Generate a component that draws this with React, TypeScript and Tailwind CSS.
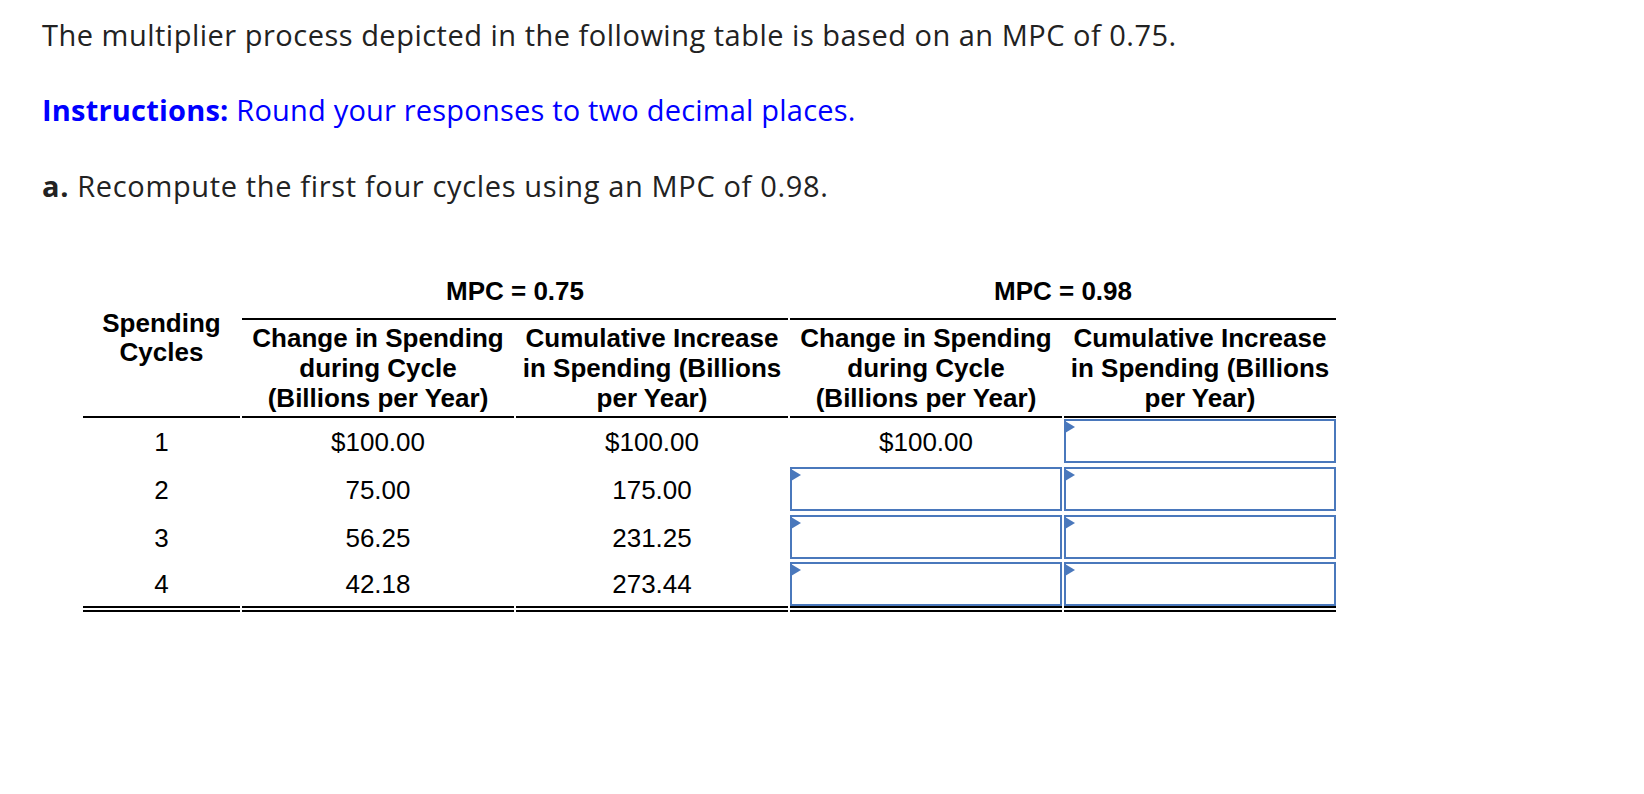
import React from "react";

type Row = {
  cycle: number;
  change: string;
  cumulative: string;
  changeNew: string | null;
};

const rows: Row[] = [
  { cycle: 1, change: "$100.00", cumulative: "$100.00", changeNew: "$100.00" },
  { cycle: 2, change: "75.00", cumulative: "175.00", changeNew: null },
  { cycle: 3, change: "56.25", cumulative: "231.25", changeNew: null },
  { cycle: 4, change: "42.18", cumulative: "273.44", changeNew: null },
];

function AnswerBox({ label }: { label: string }) {
  return (
    <div className="relative h-[44px] w-full border-2 border-[#4a78bc] bg-white">
      <svg
        className="absolute left-[-1px] top-0"
        width="10"
        height="12"
        viewBox="0 0 10 12"
      >
        <polygon points="0,0 10,6 0,12" fill="#4a78bc" />
      </svg>
      <input
        aria-label={label}
        className="h-full w-full bg-transparent px-3 text-center text-[26px] outline-none"
      />
    </div>
  );
}

function HeadCell({ children }: { children: React.ReactNode }) {
  return (
    <div className="flex h-[98px] items-center justify-center border-b-2 border-black text-center leading-[30px] font-bold">
      {children}
    </div>
  );
}

export default function App() {
  return (
    <div className="min-h-screen bg-white">
      <div className="px-[42px] pt-[18px] font-['Open_Sans',sans-serif] text-[29px] leading-[34px] text-[#222]">
        <p className="tracking-[0.5px]">
          The multiplier process depicted in the following table is based on an MPC of 0.75.
        </p>
        <p className="mt-[41px] tracking-[0.2px] text-[#0000ff]">
          <span className="font-bold">Instructions:</span> Round your responses to two decimal places.
        </p>
        <p className="mt-[42px] tracking-[0.65px]">
          <span className="font-bold">a.</span> Recompute the first four cycles using an MPC of 0.98.
        </p>
      </div>

      <div className="ml-[83px] mt-[62px] grid w-fit grid-cols-[157px_272px_272px_272px_272px] gap-x-[2px] font-['Liberation_Sans',Arial,sans-serif] text-[26px] text-black">
        {/* header */}
        <div className="row-span-2 flex items-center justify-center border-b-2 border-black pb-[5px] text-center font-bold leading-[29px]">
          Spending
          <br />
          Cycles
        </div>
        <div className="col-span-2 flex h-[55px] items-center justify-center border-b-2 border-black font-bold">
          MPC = 0.75
        </div>
        <div className="col-span-2 flex h-[55px] items-center justify-center border-b-2 border-black font-bold">
          MPC = 0.98
        </div>
        <HeadCell>
          Change in Spending
          <br />
          during Cycle
          <br />
          (Billions per Year)
        </HeadCell>
        <HeadCell>
          Cumulative Increase
          <br />
          in Spending (Billions
          <br />
          per Year)
        </HeadCell>
        <HeadCell>
          Change in Spending
          <br />
          during Cycle
          <br />
          (Billions per Year)
        </HeadCell>
        <HeadCell>
          Cumulative Increase
          <br />
          in Spending (Billions
          <br />
          per Year)
        </HeadCell>

        {/* body */}
        {rows.map((r, i) => {
          const last = i === rows.length - 1;
          const cell = last
            ? "flex h-[50px] items-center justify-center border-b-[6px] border-double border-black"
            : "flex h-[48px] items-center justify-center";
          const boxCell = last
            ? "flex h-[50px] items-start border-b-[6px] border-double border-black"
            : "flex h-[48px] items-start pt-[1px]";
          return (
            <React.Fragment key={r.cycle}>
              <div className={cell}>{r.cycle}</div>
              <div className={cell}>{r.change}</div>
              <div className={cell}>{r.cumulative}</div>
              {r.changeNew ? (
                <div className={cell}>{r.changeNew}</div>
              ) : (
                <div className={boxCell}>
                  <AnswerBox label={`Change in spending, cycle ${r.cycle}`} />
                </div>
              )}
              <div className={boxCell}>
                <AnswerBox label={`Cumulative increase, cycle ${r.cycle}`} />
              </div>
            </React.Fragment>
          );
        })}
      </div>
    </div>
  );
}
